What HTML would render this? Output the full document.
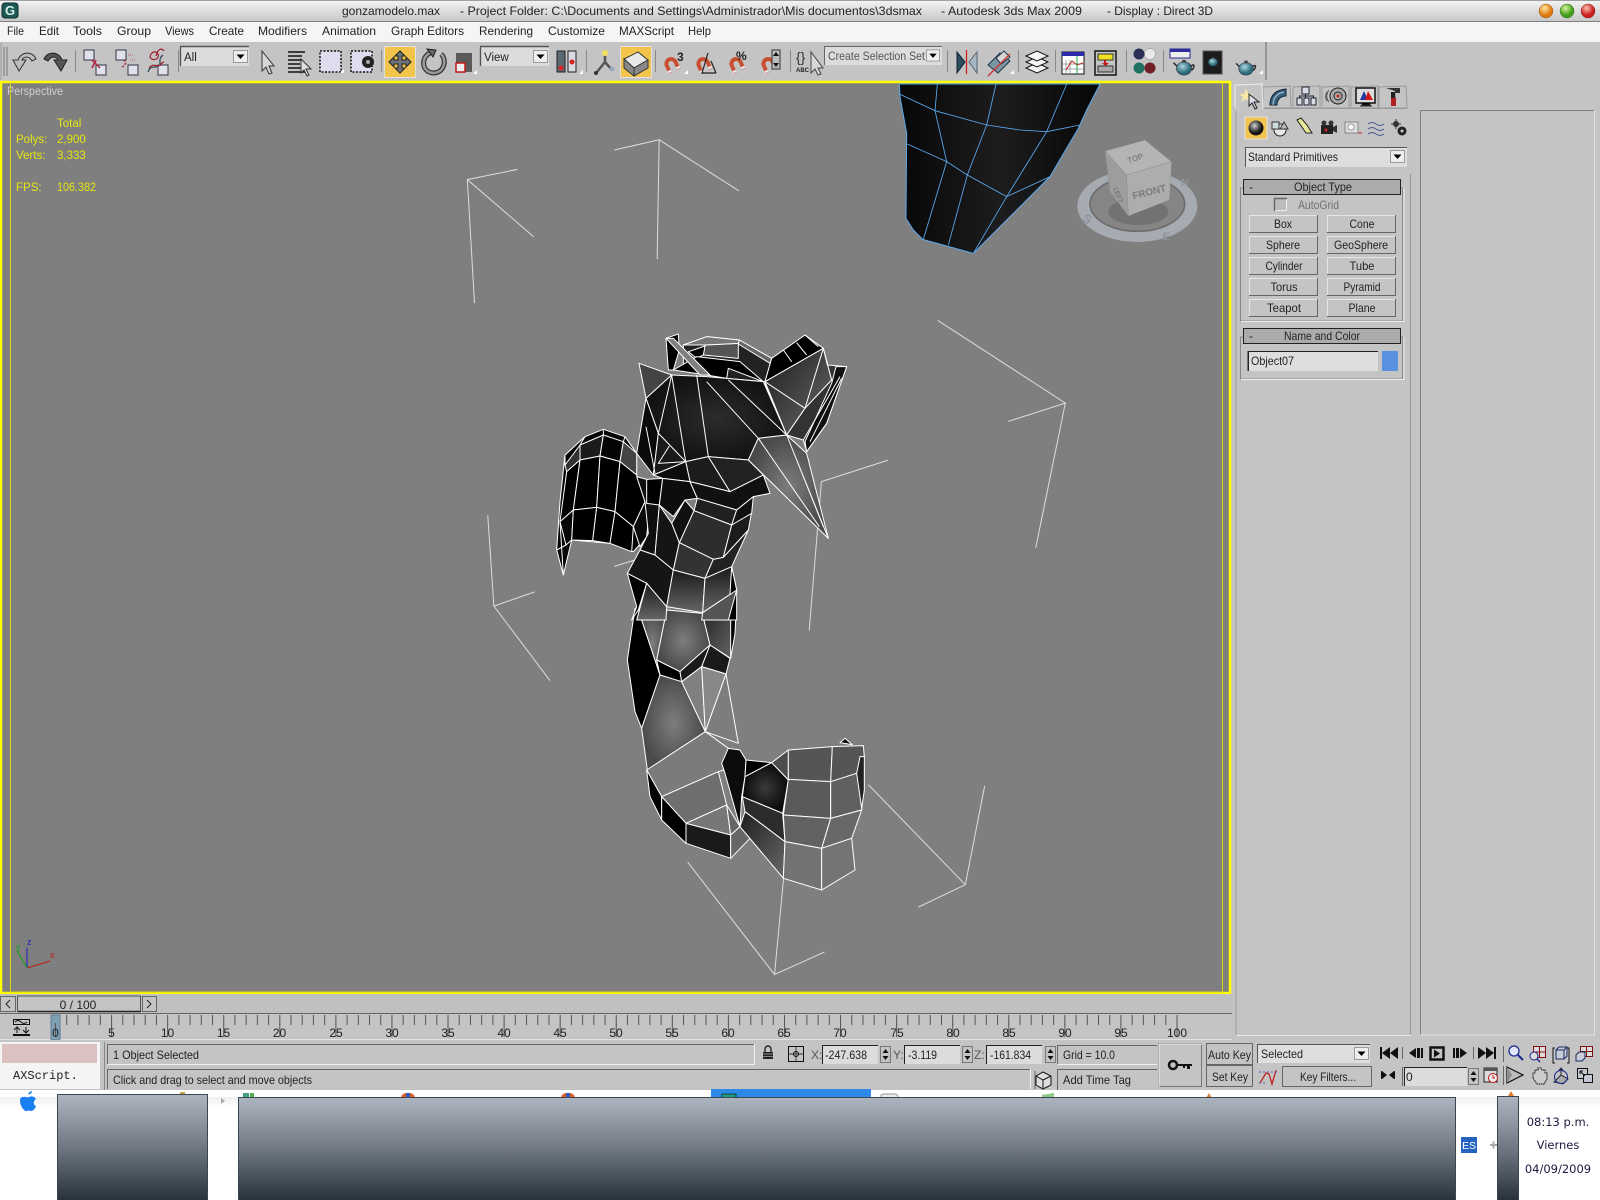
<!DOCTYPE html>
<html><head><meta charset="utf-8"><title>gonzamodelo.max - Autodesk 3ds Max 2009</title>
<style>
html,body{margin:0;padding:0;width:1600px;height:1200px;overflow:hidden;background:#c4c4c4;font-family:"Liberation Sans",sans-serif;}
svg{position:absolute;left:0;top:0}
text{font-family:"Liberation Sans",sans-serif;font-size:12px;fill:#222}
.p{fill:#c4c4c4;stroke:#666;stroke-width:1}
.t{font-size:11.500px}
</style></head><body>
<svg width="1600" height="1200" viewBox="0 0 1600 1200" xmlns="http://www.w3.org/2000/svg">
<defs>
<linearGradient id="tb" x1="0" y1="0" x2="0" y2="1"><stop offset="0" stop-color="#f4f4f4"/><stop offset="1" stop-color="#c6c6c6"/></linearGradient>
<linearGradient id="tk" x1="0" y1="0" x2="0" y2="1"><stop offset="0" stop-color="#adb5c1"/><stop offset=".5" stop-color="#6f7882"/><stop offset="1" stop-color="#27323b"/></linearGradient>
<linearGradient id="fd" x1="0" y1="0" x2="0" y2="1"><stop offset="0" stop-color="#f0f0f0"/><stop offset="1" stop-color="#ffffff"/></linearGradient>
<radialGradient id="g1"><stop offset="0" stop-color="#7d7d7d"/><stop offset="1" stop-color="#4a4a4a"/></radialGradient>
<radialGradient id="g2"><stop offset="0" stop-color="#3a3a3a"/><stop offset="1" stop-color="#0a0a0a"/></radialGradient>
<radialGradient id="g3"><stop offset="0" stop-color="#2c2c2c"/><stop offset="1" stop-color="#121212"/></radialGradient>
<linearGradient id="g4" x1="0" y1="0" x2="1" y2="1"><stop offset="0" stop-color="#1e1e1e"/><stop offset="1" stop-color="#686868"/></linearGradient>
<linearGradient id="g5" x1="0" y1="0" x2="1" y2="0"><stop offset="0" stop-color="#070707"/><stop offset=".5" stop-color="#1d1d1d"/><stop offset="1" stop-color="#060606"/></linearGradient>
<linearGradient id="g7" x1="0" y1="0" x2="0" y2="1"><stop offset="0" stop-color="#1a1a1a"/><stop offset="1" stop-color="#666"/></linearGradient>
<radialGradient id="ob" cx=".4" cy=".3"><stop offset="0" stop-color="#ffe8a0"/><stop offset="1" stop-color="#e07a10"/></radialGradient>
<radialGradient id="gb" cx=".4" cy=".3"><stop offset="0" stop-color="#d8f5a0"/><stop offset="1" stop-color="#3f9e18"/></radialGradient>
<radialGradient id="rb" cx=".4" cy=".3"><stop offset="0" stop-color="#ffc0b0"/><stop offset="1" stop-color="#c81e1e"/></radialGradient>
<radialGradient id="sp" cx=".4" cy=".35"><stop offset="0" stop-color="#d8d8d8"/><stop offset=".6" stop-color="#555"/><stop offset="1" stop-color="#111"/></radialGradient>
<radialGradient id="tp" cx=".4" cy=".35"><stop offset="0" stop-color="#a7d8e0"/><stop offset="1" stop-color="#2f6a78"/></radialGradient>
<symbol id="teapot" viewBox="0 0 24 20" overflow="visible"><path d="M1 6l4 4M19 10c4-4 5 0 1 4" fill="none" stroke="#222" stroke-width="1.5"/><ellipse cx="12" cy="12" rx="8" ry="7" fill="url(#tp)" stroke="#234" stroke-width=".6"/><rect x="10" y="3" width="4" height="3" fill="#444"/></symbol>
<symbol id="mag" viewBox="0 0 24 24" overflow="visible"><g transform="rotate(-25 12 12)"><path d="M6 21V11a6 6 0 0 1 12 0v10" fill="none" stroke="#c85030" stroke-width="5"/><path d="M3.500 19h5M15.500 19h5" stroke="#e8e8e8" stroke-width="3"/></g></symbol>
<symbol id="ar" viewBox="0 0 15 13" overflow="visible"><rect x=".5" y=".5" width="14" height="12" fill="#eee" stroke="#999"/><path d="M3.5 4.5h8l-4 4.500z" fill="#000"/></symbol>
<symbol id="btn" viewBox="0 0 69 18" overflow="visible"><rect width="69" height="18" fill="#c4c4c4"/><path d="M.5 18V.5H69" fill="none" stroke="#e6e6e6"/><path d="M0 17.500H68.500V0" fill="none" stroke="#666"/></symbol>
</defs>

<!-- title -->
<rect x="0" y="0" width="1600" height="22" fill="url(#tb)"/>
<rect x="0" y="0" width="1600" height="1" fill="#a0a0a0"/>
<rect x="0" y="21" width="1600" height="1" fill="#808080"/>
<rect x="2" y="3" width="16" height="15" rx="3" fill="#1d5a55" stroke="#0b2f2c"/>
<text x="5" y="15" style="font-size:13px;font-weight:bold;fill:#d8efe8">G</text>
<text x="342" y="15" textLength="98" lengthAdjust="spacingAndGlyphs">gonzamodelo.max</text>
<text x="460" y="15" textLength="462" lengthAdjust="spacingAndGlyphs">- Project Folder: C:\Documents and Settings\Administrador\Mis documentos\3dsmax</text>
<text x="941" y="15" textLength="141" lengthAdjust="spacingAndGlyphs">- Autodesk 3ds Max  2009</text>
<text x="1107" y="15" textLength="106" lengthAdjust="spacingAndGlyphs">- Display : Direct 3D</text>
<circle cx="1546" cy="11" r="7" fill="url(#ob)" stroke="#8a5a20" stroke-width=".5"/>
<circle cx="1567" cy="11" r="7" fill="url(#gb)" stroke="#3f6a20" stroke-width=".5"/>
<circle cx="1588" cy="11" r="7" fill="url(#rb)" stroke="#802020" stroke-width=".5"/>

<!-- menu -->
<rect x="0" y="22" width="1600" height="20" fill="#f5f5f5"/>
<g>
<text x="7" y="35" textLength="17" lengthAdjust="spacingAndGlyphs">File</text><text x="39" y="35" textLength="20" lengthAdjust="spacingAndGlyphs">Edit</text><text x="73" y="35" textLength="29" lengthAdjust="spacingAndGlyphs">Tools</text><text x="117" y="35" textLength="34" lengthAdjust="spacingAndGlyphs">Group</text><text x="165" y="35" textLength="29" lengthAdjust="spacingAndGlyphs">Views</text><text x="209" y="35" textLength="35" lengthAdjust="spacingAndGlyphs">Create</text><text x="258" y="35" textLength="49" lengthAdjust="spacingAndGlyphs">Modifiers</text><text x="322" y="35" textLength="54" lengthAdjust="spacingAndGlyphs">Animation</text><text x="391" y="35" textLength="73" lengthAdjust="spacingAndGlyphs">Graph Editors</text><text x="479" y="35" textLength="54" lengthAdjust="spacingAndGlyphs">Rendering</text><text x="548" y="35" textLength="57" lengthAdjust="spacingAndGlyphs">Customize</text><text x="619" y="35" textLength="55" lengthAdjust="spacingAndGlyphs">MAXScript</text><text x="688" y="35" textLength="23" lengthAdjust="spacingAndGlyphs">Help</text>
</g>

<!-- toolbar -->
<rect x="0" y="42" width="1600" height="42" fill="#c4c4c4"/>
<path d="M1 80V43" fill="none" stroke="#9a9a9a"/>
<path d="M1266 42V80" stroke="#666"/>
<path d="M4 47V76M7 47V76" stroke="#777"/>
<g stroke="#8a8a8a">
<path d="M75.500 50V72M178.500 50V72M381.500 50V72M586.500 50V72M655.500 50V72M790.500 50V72M947.500 50V72M1018.500 50V72M1055.500 50V72M1126.500 50V72M1163.500 50V72"/>
</g>
<!-- undo/redo -->
<path d="M19 71l-6-11h5c3-9 15-9 18-1l-4 2c-3-5-8-5-10-1h4z" fill="#bdbdbd" stroke="#333"/>
<path d="M61 71l6-11h-5c-3-9-15-9-18-1l4 2c3-5 8-5 10-1h-4z" fill="#555" stroke="#222"/>
<!-- link icons -->
<g fill="#dfe2ec" stroke="#334">
<rect x="84" y="50" width="10" height="10"/><rect x="96" y="65" width="10" height="10"/>
<rect x="116" y="50" width="10" height="10"/><rect x="128" y="65" width="10" height="10"/>
<rect x="158" y="65" width="10" height="10"/>
</g>
<path d="M92 60l8 8M96 60l-4 8" fill="none" stroke="#b02040" stroke-width="1.500"/>
<path d="M124 60c4 3 0 6-3 8" fill="none" stroke="#b02040" stroke-dasharray="2 1.500" stroke-width="1.500"/><path d="M128 55h6M130 60h6" stroke="#c06070" stroke-dasharray="1 1"/>
<path d="M150 58c0-8 10-8 8-1-2 4-8 3-8-1M149 68c4-6 9 0 12-3M156 56c2-8 6-8 8-5M164 62c-3 1-4 3-4 4" fill="none" stroke="#a02030" stroke-width="1.200"/>
<path d="M148 72c3-8 7-3 9-6M163 55c-4 3-3 6-3 9" fill="none" stroke="#345" stroke-width="1.200"/>
<!-- All dropdown -->
<rect x="181" y="47" width="68" height="19" fill="#dcdcdc"/><path d="M180 46.500H249M180.500 47V66" stroke="#555" stroke-width="1.400"/>
<text x="184" y="61" class="t">All</text><use href="#ar" x="233" y="50" width="15" height="13"/>
<!-- select cursor -->
<path d="M262 51v20l4-4 3 7 3-1-3-7h5z" fill="#d8d8d8" stroke="#333"/>
<path d="M288 52h17M288 56h14M288 60h14M288 64h12M288 68h14M288 72h17" stroke="#111" stroke-width="1.600"/>
<path d="M301 59v14l3-3 3 6 2-1-3-6h5z" fill="#e0e0e0" stroke="#333"/>
<rect x="320" y="51" width="21" height="21" fill="#dde" stroke="#111" stroke-width="1.500" stroke-dasharray="2 1.500"/>
<rect x="351" y="51" width="21" height="21" fill="#dde" stroke="#111" stroke-width="1.500" stroke-dasharray="2 1.500"/>
<circle cx="368" cy="62" r="6" fill="#222"/><circle cx="368" cy="62" r="2" fill="#aaa"/>
<path d="M340 73h4v-4zM473 74h4v-4zM579 74h4v-4zM684 74h4v-4zM1010 74h4v-4zM1259 74h4v-4z" fill="#fff"/>
<!-- move button -->
<rect x="384.500" y="46.500" width="31" height="31" fill="#f2c44b" stroke="#e2e2e2"/>
<path d="M400 51l-5 5h3v4h-4v-3l-5 5 5 5v-3h4v4h-3l5 5 5-5h-3v-4h4v3l5-5-5-5v3h-4v-4h3z" fill="#6c7078" stroke="#222"/>
<!-- rotate -->
<path d="M433 52c-12 2-13 20 0 21 12 0 14-14 8-19" fill="none" stroke="#333" stroke-width="5"/><path d="M433 52c-12 2-13 20 0 21 12 0 14-14 8-19" fill="none" stroke="#9a9a9a" stroke-width="2.600"/><path d="M427 49l9 1-3 7z" fill="#666" stroke="#222"/>
<!-- scale -->
<rect x="456" y="53" width="16" height="19" fill="#5a5a5a"/><rect x="456" y="63" width="9" height="9" fill="#eee" stroke="#c01818" stroke-width="1.500"/>
<!-- View dropdown -->
<rect x="481" y="47" width="68" height="19" fill="#dcdcdc"/><path d="M480 46.500H549M480.500 47V66" stroke="#555" stroke-width="1.400"/>
<text x="484" y="61" class="t">View</text><use href="#ar" x="533" y="50" width="15" height="13"/>
<rect x="557" y="51" width="8" height="21" fill="#5b6a72" stroke="#222"/><rect x="568" y="51" width="8" height="21" fill="#d8dce2" stroke="#222"/><circle cx="561" cy="68" r="2.500" fill="#d22"/><circle cx="572" cy="62" r="2.500" fill="#d22"/>
<!-- manipulate -->
<path d="M605 62l-8 10M605 62l7 8M605 62v-7" stroke="#555" stroke-width="2.500"/><circle cx="605" cy="53" r="3" fill="#f0e060"/><circle cx="596" cy="73" r="2" fill="#333"/><circle cx="612" cy="69" r="2.500" fill="#9ab"/>
<!-- keyboard yellow -->
<rect x="620.500" y="46.500" width="31" height="31" fill="#f2c44b" stroke="#e2e2e2"/>
<path d="M624 59l14-7 10 8-14 8z" fill="#e8e8e8" stroke="#333"/><path d="M624 59v9l10 8v-8zM634 68v8l14-8v-8z" fill="#888" stroke="#333"/>
<!-- magnets -->
<use href="#mag" x="662" y="55" width="19" height="19"/><use href="#mag" x="694" y="55" width="19" height="19"/><use href="#mag" x="727" y="55" width="19" height="19"/><use href="#mag" x="759" y="55" width="19" height="19"/>
<text x="677" y="61" style="font-size:12px;font-weight:bold">3</text>
<path d="M708 53l-6 20h14M711 61l5 12" fill="none" stroke="#222" stroke-width="1.200"/>
<text x="736" y="60" style="font-size:12px;font-weight:bold">%</text>
<rect x="772" y="50" width="8" height="19" fill="#bbb" stroke="#333"/><path d="M776 52l-3 4h6zM776 67l-3-4h6z" fill="#111"/>
<text x="796" y="62" style="font-size:14px;fill:#333">{}</text><text x="796" y="72" style="font-size:6px;font-weight:bold">ABC</text>
<path d="M811 52v21l4-4 3 6 3-1-3-6h5z" fill="#d8d8d8" stroke="#444"/>
<!-- create selection set -->
<rect x="825" y="47" width="117" height="18" fill="#dcdcdc"/><path d="M824 46.500H942M824.500 47V65" stroke="#666"/>
<text x="828" y="60" textLength="97" lengthAdjust="spacingAndGlyphs" style="fill:#555">Create Selection Set</text><use href="#ar" x="926" y="49" width="14" height="13"/>
<!-- mirror -->
<path d="M957 52l8 10-8 11z" fill="#2a4e5e" stroke="#123"/><path d="M977 52l-8 10 8 11z" fill="#a8b8c4" stroke="#567"/><path d="M966.500 50V74" stroke="#d02020" stroke-width="1.300"/>
<path d="M988 65l12-12 10 8-12 12z" fill="#7a95a4" stroke="#234"/><path d="M996 58l8-7 6 6-9 7z" fill="#d5d5d5" stroke="#234"/><path d="M988 76l22-22" stroke="#d03030" stroke-width="1.300"/>
<!-- layers -->
<g fill="#f4f4f4" stroke="#111"><path d="M1026 68l11-5 11 5-11 5z"/><path d="M1026 62l11-5 11 5-11 5z"/><path d="M1026 56l11-5 11 5-11 5z"/></g>
<!-- curve editor -->
<rect x="1062" y="52" width="22" height="22" fill="#fff" stroke="#111"/><rect x="1062" y="52" width="22" height="4" fill="#2a2aaa"/><path d="M1066 60v13M1070 60v13M1062 64h22M1062 69h22" stroke="#888" stroke-width=".7"/><path d="M1066 70l6-9 5 4 6-2" fill="none" stroke="#c02020"/><path d="M1077 56v18" stroke="#20a040"/>
<!-- schematic -->
<rect x="1095" y="51" width="21" height="24" fill="#c4c4c4" stroke="#111" stroke-width="1.500"/><rect x="1098" y="54" width="15" height="6" fill="#f0e020" stroke="#333"/><rect x="1098" y="66" width="15" height="6" fill="#aaa" stroke="#333"/><path d="M1105 60v5" stroke="#c01818" stroke-width="2"/><path d="M1102 63h7l-3.500 3z" fill="#c01818"/>
<!-- material balls -->
<circle cx="1139" cy="54" r="5.500" fill="#2a3058"/><circle cx="1150" cy="54" r="5.500" fill="#e8e8e8" stroke="#777" stroke-width=".4"/><circle cx="1139" cy="68" r="5.500" fill="#1f7060"/><circle cx="1150" cy="68" r="5.500" fill="#702028"/>
<!-- render -->
<rect x="1170" y="49" width="20" height="9" fill="#eee" stroke="#2a2a8a"/><rect x="1170" y="49" width="20" height="3" fill="#2a2a9a"/>
<use href="#teapot" x="1172" y="57" width="24" height="19"/>
<rect x="1203" y="51" width="19" height="23" fill="#1c1c1c" stroke="#555"/><use href="#teapot" x="1206" y="55" width="14" height="12"/>
<use href="#teapot" x="1234" y="58" width="24" height="18"/>

<!-- viewport -->
<rect x="1" y="82" width="1229" height="911" fill="#7f7f7f" stroke="#ffff00" stroke-width="2.500"/>
<path d="M10.500 83V992H1222.500" fill="none" stroke="#d8d40e" stroke-width="1"/><path d="M1222.500 83V992" stroke="#d8d40e"/>
<text x="7" y="95" style="font-size:11.500px;fill:#cfcfcf" textLength="56" lengthAdjust="spacingAndGlyphs">Perspective</text>
<g>
<text x="57" y="127" style="font-size:11.500px;fill:#e6e610">Total</text>
<text x="16" y="143" style="font-size:11.500px;fill:#e6e610">Polys:</text><text x="57" y="143" style="font-size:11.500px;fill:#e6e610">2,900</text>
<text x="16" y="159" style="font-size:11.500px;fill:#e6e610">Verts:</text><text x="57" y="159" style="font-size:11.500px;fill:#e6e610">3,333</text>
<text x="16" y="191" style="font-size:11.500px;fill:#e6e610">FPS:</text><text x="57" y="191" style="font-size:11.500px;fill:#e6e610" textLength="39" lengthAdjust="spacingAndGlyphs">106.382</text>
</g>
<!-- axis -->
<path d="M27 967V948" stroke="#1c1cc0" fill="none"/><path d="M27 968L50 961" stroke="#c01818"/><path d="M27 968L17 951" stroke="#18a018"/>
<text x="27" y="945" style="font-size:9px;fill:#1c1cc0">z</text><text x="16" y="950" style="font-size:9px;fill:#18a018">y</text><text x="50" y="958" style="font-size:9px;fill:#c01818">x</text>

<!-- top mesh -->
<g transform="translate(880 80) scale(.33333)">
<polygon points="58,12 660,12 620,90 595,145 510,290 280,520 128,478 100,450 78,415 80,160 60,50" fill="url(#g5)" stroke="#5aa9ef" stroke-width="3"/>
<g fill="none" stroke="#5aa9ef" stroke-width="2.600">
<polyline points="58,42 165,92 320,135 420,150 500,155 600,135"/>
<polyline points="172,12 165,92 200,245 130,478"/>
<polyline points="348,12 320,135 262,285 205,495"/>
<polyline points="560,12 500,155 380,350 280,520"/>
<polyline points="82,192 200,245 262,285 380,350 510,290"/>
</g>
<!-- viewcube -->
<ellipse cx="772" cy="378" rx="180" ry="108" fill="#a6abb2"/>
<ellipse cx="772" cy="372" rx="142" ry="82" fill="#858585" stroke="#6c6c6c" stroke-width="5"/>
<ellipse cx="775" cy="395" rx="90" ry="40" fill="#727272"/>
<text x="604" y="420" transform="rotate(35 604 420)" style="font-size:38px;font-weight:bold;fill:#8d939b">S</text>
<text x="848" y="480" style="font-size:32px;font-weight:bold;fill:#8d939b">E</text>
<text x="903" y="320" style="font-size:32px;font-weight:bold;fill:#8d939b">N</text>
<polygon points="675,213 795,180 875,245 740,285" fill="#b4b4b4" stroke="#777"/>
<polygon points="675,213 740,285 745,408 690,335" fill="#9d9d9d" stroke="#888"/>
<polygon points="740,285 875,245 868,360 745,408" fill="#adadad" stroke="#888"/>
<text x="745" y="250" transform="rotate(-18 745 250)" style="font-size:24px;font-weight:bold;fill:#7f7f7f">TOP</text>
<text x="760" y="358" transform="rotate(-14 760 358)" style="font-size:30px;font-weight:bold;fill:#7c7c7c">FRONT</text>
<text x="700" y="325" transform="rotate(70 700 325)" style="font-size:20px;fill:#666">LEFT</text>
</g>

<!-- bones -->
<g transform="scale(1.02041)" fill="none" stroke="#dcdcdc" stroke-width="1">
<polyline points="507,166 458,176 465,297"/><path d="M458,176L523,232"/>
<polyline points="602,147 646,137 644,254"/><path d="M646,137L724,187"/>
<polyline points="919,314 1044,395 988,413"/><path d="M1044,395L1015,537"/>
<polyline points="870,451 805,472 793,618"/>
<polyline points="478,505 484,594 524,580"/><path d="M484,594L539,667"/>
<path d="M602,555L625,548"/>
<polyline points="965,770 946,867 900,889"/><path d="M946,867L851,769"/>
<polyline points="674,845 759,955 808,933"/><path d="M759,955L768,860"/>
</g>

<!-- lower body -->
<g transform="translate(600 600) scale(.33333)" stroke="#fff" stroke-width="3" stroke-linejoin="round">
<polygon points="720,428 735,415 757,434" fill="#000"/>
<polygon points="105,25 82,180 105,335 125,385 180,225 115,30" fill="#000"/>
<polygon points="115,30 180,225 170,180 200,30" fill="url(#g1)"/>
<polygon points="200,30 170,180 240,215 330,135 307,40" fill="url(#g1)"/>
<polygon points="307,40 330,135 392,175 410,0 380,0" fill="url(#g4)"/>
<polygon points="392,0 410,0 405,100 392,175" fill="#000"/>
<polygon points="170,180 240,215 245,245 180,225" fill="#000"/>
<polygon points="240,215 330,135 305,200 245,245" fill="#1a1a1a"/>
<polygon points="330,135 390,175 378,222 305,200" fill="#1a1a1a"/>
<polygon points="180,225 245,245 316,395 142,510 125,385" fill="url(#g1)"/>
<polygon points="245,245 305,200 316,395" fill="#808080"/>
<polygon points="305,200 378,222 316,395" fill="#888"/>
<polygon points="378,222 415,430 316,395" fill="#7d7d7d"/>
<polygon points="316,395 385,445 370,510 355,515 185,590 140,510" fill="#7b7b7b"/>
<polygon points="185,590 355,515 380,615 258,670" fill="#6f6f6f"/>
<polygon points="258,670 380,615 392,705" fill="#777"/>
<polygon points="380,615 420,680 392,705" fill="#666"/>
<polygon points="140,510 185,590 185,660 150,590" fill="#000"/>
<polygon points="185,590 258,670 258,730 185,660" fill="#000"/>
<polygon points="258,670 392,705 392,775 258,730" fill="#1a1a1a"/>
<polygon points="392,705 420,680 450,715 392,775" fill="#666"/>
<polygon points="385,445 420,450 438,480 435,530 425,590 420,680 375,520 365,490" fill="#0c0c0c"/>
<polygon points="438,480 515,488 435,530" fill="#000"/>
<polygon points="515,488 565,450 565,540" fill="#4c4c4c"/>
<polygon points="435,530 515,488 565,540 548,640 427,590" fill="url(#g2)"/>
<polygon points="565,450 697,440 692,545 565,538" fill="#555"/>
<polygon points="697,440 790,437 793,470 770,520 692,545" fill="#555"/>
<polygon points="565,538 692,545 692,655 550,645" fill="#5a5a5a"/>
<polygon points="692,545 770,520 793,510 785,630 692,655" fill="#606060"/>
<polygon points="780,470 793,470 793,570 785,625 770,520" fill="#222"/>
<polygon points="427,590 548,640 555,725 435,635" fill="#2c2c2c"/>
<polygon points="420,680 435,635 555,725 550,835" fill="url(#g4)"/>
<polygon points="550,645 692,655 665,745 555,725" fill="#626262"/>
<polygon points="692,655 785,630 755,715 665,745" fill="#686868"/>
<polygon points="555,725 665,745 665,870 550,835" fill="#737373"/>
<polygon points="665,745 755,715 765,810 665,870" fill="#747474"/>
</g>

<!-- upper body -->
<g transform="translate(540 320) scale(.33333)" stroke="#fff" stroke-width="3" stroke-linejoin="round">
<!-- wing -->
<polygon points="50,690 60,545 75,405 135,350 190,328 255,350 290,400 290,470 315,545 325,600 320,650 280,695 210,670 95,660 70,765" fill="#050505"/>
<g fill="#000">
<polygon points="75,435 120,375 120,420 80,455" fill="#333"/>
<polygon points="120,375 190,345 180,408 120,420" fill="#1b1b1b"/>
<polygon points="190,345 250,365 240,425 180,408" fill="#050505"/>
<polygon points="250,365 290,400 290,465 240,425" fill="#444"/>
<polygon points="80,455 120,420 100,570 60,605"/>
<polygon points="120,420 180,408 170,562 100,570"/>
<polygon points="180,408 240,425 225,575 170,562"/>
<polygon points="240,425 290,465 315,545 280,620 225,575"/>
<polygon points="60,605 100,570 95,660 78,675" fill="#070707"/>
<polygon points="100,570 170,562 158,662 95,660"/>
<polygon points="170,562 225,575 210,670 158,662"/>
<polygon points="225,575 280,620 275,695 210,670"/>
<polygon points="280,620 315,545 325,600 320,650 300,680" fill="#0a0a0a"/>
</g>
<path d="M75,405L75,435M135,350L120,375M190,328L190,345M255,350L250,365M50,690L78,675M70,765L60,605" fill="none"/>
<!-- head -->
<polygon points="430,75 500,50 598,60 695,115 675,185 560,175 430,150" fill="#222"/>
<polygon points="495,75 595,70 595,115 490,105" fill="#555"/>
<polygon points="445,95 495,78 490,105 470,115" fill="#000"/>
<polygon points="400,150 470,110 600,125 670,185 565,145 560,175 500,165" fill="#000"/>
<polygon points="430,75 500,50 598,60 595,70 495,75" fill="#777"/>
<polygon points="598,60 695,115 690,130 595,72" fill="#666"/>
<polygon points="695,115 795,45 850,85 675,185" fill="#000"/>
<path d="M730,90L755,125M770,68L800,105M795,45L835,80" fill="none"/>
<polygon points="378,55 415,42 418,90 400,150 385,150" fill="#000"/>
<polygon points="378,55 400,55 510,165 480,165" fill="#808080"/>
<polygon points="297,130 395,165 318,235" fill="#444"/>
<polygon points="395,165 500,170 670,185 740,345 655,355 625,420 505,410 437,425 355,340 318,235" fill="url(#g3)"/>
<path d="M395,165L355,340M395,165L437,425M470,165L505,410M500,185L655,355M565,180L740,345M675,190L740,345" fill="none"/>
<polygon points="675,185 850,85 875,180 795,265 740,345" fill="url(#g4)"/>
<path d="M675,185L795,265M850,85L795,265" fill="none"/>
<polygon points="850,85 862,135 920,140 860,310 800,395 790,360 740,345 795,265 875,180" fill="#333"/>
<polygon points="888,140 920,140 860,310 800,395 795,365 875,190" fill="#111"/>
<path d="M790,360L900,170M810,365L905,175" fill="none"/>
<!-- torso -->
<polygon points="318,235 355,340 340,465 290,400" fill="#0a0a0a"/>
<polygon points="355,340 437,425 340,465" fill="#1a1a1a"/>
<path d="M388,378L355,430L437,425M318,320L345,460" fill="none"/>
<polygon points="437,425 505,410 570,515 450,485" fill="#1c1c1c"/>
<polygon points="505,410 625,420 670,465 570,515" fill="#222"/>
<polygon points="290,470 320,478 358,555 345,705 300,690 325,640 315,545" fill="#0f0f0f"/>
<polygon points="320,478 368,475 358,555 320,550" fill="#000"/>
<polygon points="340,465 437,425 450,485 368,475" fill="#0c0c0c"/>
<polygon points="368,475 450,485 472,535 435,540 400,590 358,555" fill="#0d0d0d"/>
<polygon points="570,515 670,465 690,520 640,530 590,570 472,535 450,485" fill="#111"/>
<polygon points="472,535 590,570 575,615 462,572" fill="#202020"/>
<polygon points="462,572 575,615 550,712 520,718 418,668" fill="#2d2d2d"/>
<polygon points="435,540 462,572 418,668 395,610" fill="#111"/>
<polygon points="358,555 395,610 418,668 400,750 345,705" fill="#151515"/>
<polygon points="418,668 520,718 495,775 400,750" fill="#333"/>
<polygon points="520,718 550,712 625,630 575,740 495,775" fill="#222"/>
<polygon points="575,615 635,575 625,630 550,712" fill="#1c1c1c"/>
<polygon points="590,570 640,530 635,580 575,615" fill="#111"/>
<polygon points="300,690 345,705 400,750 380,860 320,790 262,760" fill="#151515"/>
<polygon points="262,760 320,790 295,870 275,900 290,860" fill="#000"/>
<polygon points="320,790 380,860 378,900 290,900" fill="url(#g7)"/>
<polygon points="400,750 495,775 488,878 380,860" fill="url(#g7)"/>
<polygon points="495,775 575,740 590,810 488,878" fill="url(#g7)"/>
<polygon points="575,740 590,810 590,900 565,900" fill="#000"/>
<polygon points="488,878 590,810 565,900 485,900" fill="#555"/>
<!-- spike -->
<polygon points="655,355 740,345 800,400 865,655 625,420" fill="url(#g1)"/>
<path d="M655,355L838,620M740,345L850,620M770,420L865,655" fill="none"/>
</g>

<!-- right panel -->
<rect x="1232" y="84" width="368" height="956" fill="#c4c4c4"/>
<path d="M1233 108.500H1407" stroke="#9a9a9a"/>
<g fill="#c4c4c4" stroke="#9a9a9a">
<path d="M1263 108V87l27-1 1 22zM1293 108V87l27-1v22zM1322 108V87l27-1v22zM1351 108V87l27-1v22zM1379 108V87l27-1 1 22z"/>
</g>
<path d="M1235 109V85l27-1 1 25" fill="#c4c4c4" stroke="#ececec"/>
<path d="M1236 110.500V1036" stroke="#9a9a9a"/>
<path d="M1410.500 174V1035" stroke="#9a9a9a"/>
<path d="M1236 1035.500H1411" stroke="#e8e8e8"/>
<path d="M1420.500 1035V110.500H1594" fill="none" stroke="#808080"/><path d="M1594.500 110V1035H1420" fill="none" stroke="#e0e0e0"/>
<!-- tab icons -->
<path d="M1246 88l2 5 5 1-4 3 1 5-4-3-5 3 2-5-4-3h5z" fill="#f8e8a8"/><path d="M1249 94v12l3-3 3 6 2-1-3-6h5z" fill="#dde" stroke="#222"/>
<path d="M1270 105c0-10 6-15 16-16v7c-6 0-9 4-9 9z" fill="#36627e" stroke="#123"/><path d="M1273 105c0-8 5-12 11-13" fill="none" stroke="#bcd"/>
<rect x="1302" y="87" width="7" height="7" fill="#d8dde6" stroke="#223"/><rect x="1297" y="98" width="5" height="7" fill="#d8dde6" stroke="#223"/><rect x="1304" y="98" width="5" height="7" fill="#d8dde6" stroke="#223"/><rect x="1311" y="98" width="5" height="7" fill="#d8dde6" stroke="#223"/><path d="M1305.500 94v4M1299.500 98v-2h14v2" fill="none" stroke="#223"/>
<circle cx="1338" cy="96" r="8" fill="#aaa" stroke="#222"/><circle cx="1338" cy="96" r="4" fill="none" stroke="#222"/><circle cx="1338" cy="96" r="1.500" fill="#c22"/><path d="M1329 90c-3 4-3 8 0 12M1327 92c-2 3-2 6 0 9" fill="none" stroke="#555"/>
<rect x="1356" y="88" width="19" height="15" fill="#ddd" stroke="#111" stroke-width="1.500"/><path d="M1364 91l-4 9h8z" fill="#2038a0"/><path d="M1368 91l-3 9h8z" fill="#d01818"/><path d="M1362 103v2h8v-2M1360 106h12" stroke="#222"/>
<path d="M1386 88h14v5h-5v-2z" fill="#333"/><path d="M1391 92h4l1 14h-5z" fill="#222"/><path d="M1391 98h5v8h-5z" fill="#b02020"/>
<!-- command icons -->
<rect x="1245" y="117" width="22" height="22" fill="#f2c44b" stroke="#e2e2e2"/><circle cx="1256" cy="128" r="7.500" fill="url(#sp)"/>
<circle cx="1280" cy="130" r="6" fill="#e8e8e8" stroke="#222"/><rect x="1272" y="122" width="7" height="7" fill="#cdd" stroke="#333"/><path d="M1284 122l-4 7h8z" fill="#bbb" stroke="#333"/>
<path d="M1297 120l4-2 6 7 5 8-6 0z" fill="#e8e89a" stroke="#222"/>
<rect x="1321" y="125" width="12" height="9" fill="#222"/><circle cx="1324" cy="123" r="2.500" fill="#333"/><circle cx="1331" cy="123" r="2.500" fill="#333"/><path d="M1333 127l4-2v8l-4-2z" fill="#333"/><circle cx="1326" cy="130" r="1.500" fill="#c22"/>
<rect x="1345" y="122" width="13" height="11" fill="#ddd" stroke="#888"/><circle cx="1351" cy="127" r="3" fill="#fff" stroke="#999"/><path d="M1358 133h4" stroke="#c22"/>
<path d="M1368 124q4-3 8 0t8 0M1368 129q4-3 8 0t8 0M1368 134q4-3 8 0t8 0" fill="none" stroke="#4a5a90"/>
<circle cx="1396" cy="124" r="3" fill="#333"/><circle cx="1402" cy="131" r="4.500" fill="#222"/><circle cx="1402" cy="131" r="1.500" fill="#ccc"/><path d="M1396 119v10M1391 124h10" stroke="#333"/>
<!-- dropdown -->
<rect x="1245" y="147" width="162" height="20" fill="#dedede"/><path d="M1245 147.500H1407M1245.500 147V167" stroke="#555"/>
<text x="1248" y="161" textLength="90" lengthAdjust="spacingAndGlyphs">Standard Primitives</text><use href="#ar" x="1390" y="149" width="15" height="15"/>
<!-- groups -->
<path d="M1240.500 321V188h162v133z" fill="none" stroke="#888"/><path d="M1241 321.500H1404M1404 188V322" stroke="#eee"/>
<path d="M1240.500 379V337h162v42z" fill="none" stroke="#888"/><path d="M1241 379.500H1404M1404 337V380" stroke="#eee"/>
<rect x="1243.500" y="179.500" width="157" height="15" fill="#ababab" stroke="#222"/><rect x="1243.500" y="328.500" width="157" height="15" fill="#ababab" stroke="#222"/>
<text x="1249" y="191">-</text><text x="1323" y="191" text-anchor="middle" textLength="58" lengthAdjust="spacingAndGlyphs">Object Type</text>
<text x="1249" y="340">-</text><text x="1322" y="340" text-anchor="middle" textLength="76" lengthAdjust="spacingAndGlyphs">Name and Color</text>
<rect x="1274.500" y="198.500" width="12" height="12" fill="#bcbcbc" stroke="#eee"/><path d="M1274.500 211V198.500H1287" fill="none" stroke="#666" stroke-width="1.400"/>
<text x="1298" y="209" style="fill:#707070" textLength="41" lengthAdjust="spacingAndGlyphs">AutoGrid</text>
<use href="#btn" x="1249" y="215" width="69" height="18"/><use href="#btn" x="1327" y="215" width="69" height="18"/>
<use href="#btn" x="1249" y="236" width="69" height="18"/><use href="#btn" x="1327" y="236" width="69" height="18"/>
<use href="#btn" x="1249" y="257" width="69" height="18"/><use href="#btn" x="1327" y="257" width="69" height="18"/>
<use href="#btn" x="1249" y="278" width="69" height="18"/><use href="#btn" x="1327" y="278" width="69" height="18"/>
<use href="#btn" x="1249" y="299" width="69" height="18"/><use href="#btn" x="1327" y="299" width="69" height="18"/>
<g text-anchor="middle">
<text x="1283" y="228" textLength="18" lengthAdjust="spacingAndGlyphs">Box</text><text x="1362" y="228" textLength="25" lengthAdjust="spacingAndGlyphs">Cone</text>
<text x="1283" y="249" textLength="34" lengthAdjust="spacingAndGlyphs">Sphere</text><text x="1361" y="249" textLength="54" lengthAdjust="spacingAndGlyphs">GeoSphere</text>
<text x="1284" y="270" textLength="37" lengthAdjust="spacingAndGlyphs">Cylinder</text><text x="1362" y="270" textLength="25" lengthAdjust="spacingAndGlyphs">Tube</text>
<text x="1284" y="291" textLength="27" lengthAdjust="spacingAndGlyphs">Torus</text><text x="1362" y="291" textLength="37" lengthAdjust="spacingAndGlyphs">Pyramid</text>
<text x="1284" y="312" textLength="34" lengthAdjust="spacingAndGlyphs">Teapot</text><text x="1362" y="312" textLength="27" lengthAdjust="spacingAndGlyphs">Plane</text>
</g>
<rect x="1248" y="351" width="130" height="20" fill="#dedede"/><path d="M1248 371V351.500H1378M1248.500 351V371" fill="none" stroke="#222"/>
<text x="1251" y="365" textLength="43" lengthAdjust="spacingAndGlyphs">Object07</text>
<rect x="1382" y="351" width="16" height="20" fill="#5a90e0"/>

<!-- time slider -->
<rect x="0" y="994" width="1232" height="20" fill="#c0c0c0"/>
<path d="M0 1013.500H1232" stroke="#666"/>
<rect x=".5" y="996.500" width="15" height="15" class="p"/><rect x="142.500" y="996.500" width="14" height="15" class="p"/>
<rect x="17.500" y="996" width="123" height="15.500" fill="#c4c4c4" stroke="#555"/><path d="M18 1011.500H141" stroke="#222" stroke-width="1.500"/>
<path d="M10 1000l-4 4 4 4M147 1000l4 4-4 4" fill="none" stroke="#222"/>
<text x="78" y="1009" text-anchor="middle">0 / 100</text>
<!-- ruler -->
<rect x="0" y="1014" width="1232" height="26" fill="#c4c4c4"/>
<path d="M0 1039.500H1232" stroke="#e2e2e2"/><path d="M1232 1040.500H1600" stroke="#666"/>
<line x1="55" y1="1020" x2="1178" y2="1020" stroke="#555" stroke-width="10" stroke-dasharray="1 10.215"/>
<rect x="51" y="1015" width="9" height="25" fill="#7f9fb5" stroke="#5e7d92"/>
<line x1="55" y1="1030" x2="1178" y2="1030" stroke="#555" stroke-width="14" stroke-dasharray="1 55.075"/>
<g text-anchor="middle">
<text x="55.500" y="1037">0</text><text x="111.500" y="1037">5</text><text x="167.500" y="1037">10</text><text x="223.500" y="1037">15</text><text x="279.500" y="1037">20</text><text x="336" y="1037">25</text><text x="392" y="1037">30</text><text x="448" y="1037">35</text><text x="504" y="1037">40</text><text x="560" y="1037">45</text><text x="616" y="1037">50</text><text x="672" y="1037">55</text><text x="728" y="1037">60</text><text x="784" y="1037">65</text><text x="840" y="1037">70</text><text x="897" y="1037">75</text><text x="953" y="1037">80</text><text x="1009" y="1037">85</text><text x="1065" y="1037">90</text><text x="1121" y="1037">95</text><text x="1177" y="1037">100</text>
</g>
<rect x="13.500" y="1019.500" width="16" height="5" fill="none" stroke="#111"/><path d="M15 1022q3-3 6 0t6 0" fill="none" stroke="#111"/><path d="M17 1027v6M14 1030l3-3 3 3M26 1027v6M23 1030l3 3 3-3" fill="none" stroke="#111"/><rect x="13" y="1034" width="17" height="2" fill="#111"/>

<!-- status -->
<rect x="0" y="1040" width="1600" height="50" fill="#c4c4c4"/>
<rect x="0" y="1042" width="100" height="47" fill="#f4f4f4"/>
<rect x="2" y="1044" width="95" height="19" fill="#dcc1c1"/>
<text x="13" y="1079" style="font-family:'Liberation Mono',monospace;font-size:12px">AXScript.</text>
<path d="M104.500 1042V1090" stroke="#888"/>
<path d="M107.500 1064V1044.500H754" fill="none" stroke="#666"/><path d="M108 1064.500H754.500V1044" fill="none" stroke="#eee"/>
<path d="M107.500 1089V1069.500H1030" fill="none" stroke="#666"/><path d="M1030.500 1069V1089" stroke="#eee"/>
<text x="113" y="1059" textLength="86" lengthAdjust="spacingAndGlyphs">1 Object Selected</text>
<text x="113" y="1084" textLength="199" lengthAdjust="spacingAndGlyphs">Click and drag to select and move objects</text>
<!-- lock -->
<path d="M765 1052v-3a3 3 0 0 1 6 0v3" fill="none" stroke="#222" stroke-width="1.400"/><rect x="763" y="1052" width="10" height="7" fill="#222"/><path d="M763 1054h10M763 1056.500h10" stroke="#aaa" stroke-width=".7"/>
<rect x="788.500" y="1046.500" width="15" height="15" fill="none" stroke="#111"/><circle cx="796" cy="1054" r="2.500" fill="none" stroke="#111"/><path d="M796 1047v14M789 1054h14" stroke="#111" stroke-width=".7"/>
<!-- coords -->
<text x="811" y="1059" style="fill:#555">X:</text><text x="893" y="1059" style="fill:#555">Y:</text><text x="974" y="1059" style="fill:#555">Z:</text>
<g fill="#dcdcdc">
<rect x="822" y="1045" width="56" height="19"/><rect x="904" y="1045" width="56" height="19"/><rect x="986" y="1045" width="56" height="19"/><rect x="1404" y="1067" width="63" height="19"/>
</g>
<path d="M822.500 1064V1045.500H878M904.500 1064V1045.500H960M986.500 1064V1045.500H1042M1404.500 1086V1067.500H1467" fill="none" stroke="#222"/>
<text x="825" y="1059" textLength="42" lengthAdjust="spacingAndGlyphs">-247.638</text><text x="908" y="1059" textLength="29" lengthAdjust="spacingAndGlyphs">-3.119</text><text x="990" y="1059" textLength="41" lengthAdjust="spacingAndGlyphs">-161.834</text>
<text x="1406" y="1081">0</text>
<g fill="#c4c4c4" stroke="#777"><rect x="880.500" y="1046.500" width="10" height="16"/><rect x="962.500" y="1046.500" width="10" height="16"/><rect x="1045.500" y="1046.500" width="10" height="16"/><rect x="1468.500" y="1068.500" width="10" height="16"/></g>
<path d="M885.500 1049l-3 4h6zM885.500 1060l-3-4h6zM967.500 1049l-3 4h6zM967.500 1060l-3-4h6zM1050.500 1049l-3 4h6zM1050.500 1060l-3-4h6zM1473.500 1071l-3 4h6zM1473.500 1082l-3-4h6z" fill="#111"/>
<!-- grid -->
<path d="M1057.500 1064V1045.500H1157" fill="none" stroke="#666"/><path d="M1058 1064.500H1157" stroke="#eee"/>
<path d="M1057.500 1090V1069.500H1157" fill="none" stroke="#666"/>
<text x="1063" y="1059" textLength="52" lengthAdjust="spacingAndGlyphs">Grid = 10.0</text><text x="1063" y="1084" textLength="68" lengthAdjust="spacingAndGlyphs">Add Time Tag</text>
<path d="M1035 1071V1089" stroke="#666"/>
<path d="M1043 1072l8 4v9l-8 4-7-4v-9zM1043 1080l8-4M1043 1080l-7-4M1043 1080v8" fill="#ddd" stroke="#111"/>
<!-- key -->
<rect x="1158.500" y="1043.500" width="43" height="43" fill="#c4c4c4" stroke="#777"/><path d="M1159 1087V1044H1202" fill="none" stroke="#eee"/>
<circle cx="1173" cy="1065" r="4" fill="none" stroke="#111" stroke-width="2.500"/><path d="M1177 1064h15v2h-2v3h-3v-3h-2v2h-2v-2h-6z" fill="#111"/>
<rect x="1206.500" y="1043.500" width="46" height="21" class="p"/><rect x="1206.500" y="1065.500" width="46" height="21" class="p"/>
<text x="1208" y="1059" textLength="43" lengthAdjust="spacingAndGlyphs">Auto Key</text><text x="1212" y="1081" textLength="36" lengthAdjust="spacingAndGlyphs">Set Key</text>
<rect x="1257" y="1044" width="113" height="19" fill="#dedede"/><path d="M1257 1044.500H1370M1257.500 1044V1063" stroke="#555"/>
<text x="1261" y="1058" textLength="42" lengthAdjust="spacingAndGlyphs">Selected</text><use href="#ar" x="1354" y="1047" width="15" height="13"/>
<path d="M1260 1083l6-10 3 1 3 10 4-14" fill="none" stroke="#c02020" stroke-width="1.300"/><path d="M1259 1072h18M1259 1083h8" stroke="#5a5ac0" stroke-dasharray="2 2"/>
<rect x="1282.500" y="1066.500" width="89" height="20" class="p"/><text x="1328" y="1081" text-anchor="middle" textLength="56" lengthAdjust="spacingAndGlyphs">Key Filters...</text>
<!-- transport -->
<g fill="#111">
<path d="M1380 1047v12h2v-12zM1390 1047l-8 6 8 6zM1398 1047l-8 6 8 6z"/>
<path d="M1402 1047h1v12h-1z" fill="#666"/>
<path d="M1416 1048l-7 5 7 5zM1417 1048h3v10h-3zM1421 1048h2v10h-2z"/>
<rect x="1430.500" y="1047.500" width="13" height="12" fill="none" stroke="#111" stroke-width="2.500"/><path d="M1434 1049.500v8l6-4z"/>
<path d="M1453 1048h2v10h-2zM1456 1048h3v10h-3zM1460 1048l7 5-7 5z"/>
<path d="M1473 1047h1v12h-1z" fill="#666"/>
<path d="M1478 1047l8 6-8 6zM1486 1047l8 6-8 6zM1494 1047h2v12h-2z"/>
<path d="M1382 1071l5 4-5 4zM1394 1071l-5 4 5 4zM1381 1071h1v8h-1zM1394 1071h1v8h-1z"/>
<path d="M1402.500 1067v19M1503.500 1046v16M1503.500 1066v19" stroke="#666" stroke-width="1"/>
</g>
<rect x="1484" y="1068" width="13" height="14" fill="#ddd" stroke="#222"/><rect x="1484" y="1068" width="13" height="3" fill="#555"/><circle cx="1493" cy="1078" r="4.500" fill="#eee" stroke="#c01818"/><path d="M1493 1075v3h2" fill="none" stroke="#c01818"/>
<!-- viewport nav icons -->
<circle cx="1514" cy="1051" r="5" fill="#e0e6f5" stroke="#1a2a90" stroke-width="1.300"/><path d="M1518 1055l5 5" stroke="#1a2a90" stroke-width="2"/>
<rect x="1533.500" y="1046.500" width="12" height="11" fill="#ddd" stroke="#801010"/><path d="M1539.500 1047v11M1534 1052h12" stroke="#801010"/><circle cx="1534" cy="1056" r="4" fill="#ddd" stroke="#1a2a90"/><path d="M1537 1059l3 3" stroke="#1a2a90" stroke-width="1.500"/>
<path d="M1555 1048h-2v15h2M1567 1048h2v15h-2" fill="none" stroke="#111"/><path d="M1556 1050l3-3h8v9l-3 3h-8z" fill="#c8ccd6" stroke="#1a2a60"/><path d="M1556 1050h8v9M1564 1050l3-3" fill="none" stroke="#1a2a60"/>
<rect x="1580.500" y="1046.500" width="12" height="10" fill="#ddd" stroke="#801010"/><path d="M1586.500 1047v10M1581 1051.500h12" stroke="#801010"/><path d="M1576 1055l3-3h6v6l-3 3h-6z" fill="#c8ccd6" stroke="#1a2a60"/>
<path d="M1507 1067l16 8-16 8z" fill="#bbb" stroke="#111" stroke-width="1.200"/><path d="M1512 1075l-5-8v16z" fill="#8c8c8c"/>
<path d="M1533 1078v-5l2 0v-3l3 0v-2l3 0 1 2 3 0v3l2 0v6l-3 5h-7z" fill="#ccc" stroke="#111" stroke-dasharray="1.500 .6"/>
<path d="M1554 1082l7-7 7 4-5 5zM1561 1075v-7M1558.500 1071l2.500-3 2.500 3" fill="#aaa" stroke="#223"/><circle cx="1561" cy="1077" r="6.500" fill="none" stroke="#1a2a90"/>
<rect x="1577.500" y="1068.500" width="10" height="10" fill="#c4c8d4" stroke="#111"/><rect x="1583.500" y="1074.500" width="9" height="8" fill="#c4c8d4" stroke="#111"/><path d="M1580 1071l5 5M1580 1071h3M1580 1071v3" fill="none" stroke="#111"/>

<!-- taskbar -->
<rect x="0" y="1090" width="1600" height="110" fill="#fff"/>
<rect x="0" y="1097" width="1600" height="12" fill="url(#fd)"/>
<rect x="711" y="1089" width="160" height="9" fill="#2e8ae8"/>
<path d="M28 1094c1-2 3-3 4-3 0 2-2 4-4 3zM23 1097c3-1 4 1 6 0 2-1 5-1 7 2-3 2-3 6 0 7-1 3-3 5-5 5-2 0-2-1-4 0-3 1-7-6-7-10 0-3 1-4 3-4z" fill="#1a7ff0"/>
<path d="M221 1098l4 3-4 3z" fill="#aaa"/>
<g>
<rect x="180" y="1092" width="5" height="6" fill="#c8a040"/><rect x="243" y="1093" width="6" height="5" fill="#40a080"/><rect x="250" y="1093" width="4" height="5" fill="#50b050"/>
<path d="M401 1098c0-7 14-7 14 0z" fill="#d86020"/><path d="M561 1098c0-7 14-7 14 0z" fill="#d86020"/><rect x="406" y="1093" width="4" height="5" fill="#3060c0"/><rect x="566" y="1093" width="4" height="5" fill="#3060c0"/>
<rect x="722" y="1094" width="14" height="5" fill="#20a080" stroke="#104040"/>
<path d="M881 1098v-3l3-1h12l2 2v2z" fill="#eee" stroke="#999"/>
<path d="M1042 1098v-3l12-2v5z" fill="#88cc88"/>
<path d="M1206 1098l3-5 3 5z" fill="#e08030"/>
<path d="M1508 1096l3-5 3 5z" fill="#e08030"/>
</g>
<rect x="57.500" y="1094.500" width="150" height="106" fill="url(#tk)" stroke="#3c4650"/>
<rect x="238.500" y="1097.500" width="1217" height="103" fill="url(#tk)" stroke="#3c4650"/>
<rect x="1497.500" y="1096.500" width="21" height="104" fill="url(#tk)" stroke="#3c4650"/>
<rect x="1461" y="1137" width="16" height="16" fill="#2464c0"/>
<text x="1469" y="1149" text-anchor="middle" style="font-size:10.500px;fill:#fff">ES</text>
<path d="M1490 1145h7M1493.500 1141.500v7" stroke="#aaa" stroke-width="2"/>
<g text-anchor="middle">
<text x="1558" y="1126" style="font-family:'DejaVu Sans',sans-serif;font-size:11.500px;fill:#1a1a40">08:13 p.m.</text>
<text x="1558" y="1149" style="font-family:'DejaVu Sans',sans-serif;font-size:11.500px;fill:#1a1a40">Viernes</text>
<text x="1558" y="1173" style="font-family:'DejaVu Sans',sans-serif;font-size:11.500px;fill:#1a1a40">04/09/2009</text>
</g>
</svg>
</body></html>
